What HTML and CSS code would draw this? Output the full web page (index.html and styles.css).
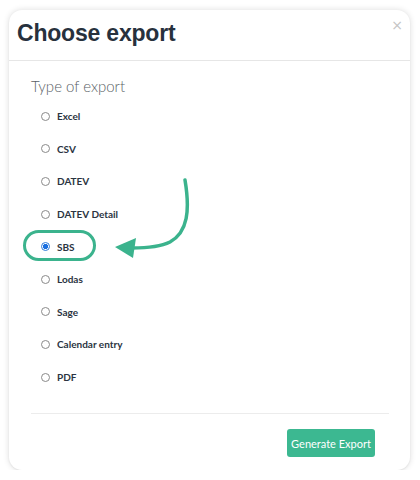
FILE: index.html
```html
<!DOCTYPE html>
<html lang="en">
<head>
  <meta charset="UTF-8">
  <meta name="viewport" content="width=device-width, initial-scale=1.0">
  <title>Choose export</title>
  <link rel="stylesheet" href="styles.css">
</head>
<body>
  <div class="modal">
    <div class="modal-header">
      <h1 class="title">Choose export</h1>
      <span class="close">&times;</span>
    </div>

    <div class="modal-body">
      <div class="section-label">Type of export</div>
      <div class="options">
        <label class="option"><input type="radio" name="type"><span>Excel</span></label>
        <label class="option"><input type="radio" name="type"><span>CSV</span></label>
        <label class="option"><input type="radio" name="type"><span>DATEV</span></label>
        <label class="option"><input type="radio" name="type"><span>DATEV Detail</span></label>
        <label class="option selected"><input type="radio" name="type" checked><span>SBS</span></label>
        <label class="option"><input type="radio" name="type"><span>Lodas</span></label>
        <label class="option"><input type="radio" name="type"><span>Sage</span></label>
        <label class="option"><input type="radio" name="type"><span>Calendar entry</span></label>
        <label class="option"><input type="radio" name="type"><span>PDF</span></label>
      </div>
    </div>

    <div class="modal-footer">
      <button class="btn-export">Generate Export</button>
    </div>

    <!-- annotation arrow pointing at SBS -->
    <svg class="arrow" width="90" height="90" viewBox="0 0 90 90">
      <path d="M85 10 C90 40 88 62 70 72 C60 77 48 78 32 78" fill="none" stroke="#3bb38d" stroke-width="3.5" stroke-linecap="round"/>
      <polygon points="15,77 36,68 33,88" fill="#3bb38d"/>
    </svg>
  </div>
</body>
</html>
```

FILE: styles.css
```css
body {
  margin: 0;
  background: #fff;
  font-family: "Lato", "Open Sans", sans-serif;
}

.modal {
  position: relative;
  margin: 10px 0 0 9px;
  width: 401px;
  height: 460px;
  box-sizing: border-box;
  background: #fff;
  border-radius: 13px;
  box-shadow: 0 0 6px rgba(0, 0, 0, 0.14), 0 1px 2px rgba(0, 0, 0, 0.06);
  display: flex;
  flex-direction: column;
}

.modal-header {
  height: 51px;
  box-sizing: border-box;
  padding: 9px 0 0 8px;
  border-bottom: 1px solid #e6e6e6;
}

.title {
  margin: 0;
  font-family: "Liberation Sans", Arial, sans-serif;
  font-size: 23px;
  font-weight: bold;
  line-height: 28px;
  color: #27313d;
  letter-spacing: -0.2px;
}

.close {
  position: absolute;
  top: 8px;
  right: 7px;
  font-family: "DejaVu Sans", sans-serif;
  font-size: 14px;
  line-height: 14px;
  color: #c4c4c4;
}

.modal-body {
  padding: 16px 21px 0 22px;
}

.section-label {
  font-size: 15px;
  font-weight: 300;
  color: #5a5f66;
  line-height: 18px;
}

.options {
  display: flex;
  flex-direction: column;
  margin-top: 5px;
  padding-bottom: 20px;
  border-bottom: 1px solid #ececec;
}

.option {
  position: relative;
  display: flex;
  align-items: center;
  height: 32.6px;
  padding-left: 10px;
  font-size: 10px;
  font-weight: bold;
  color: #2b3442;
}

.option input {
  appearance: none;
  margin: 0 7px 0 0;
  width: 9px;
  height: 9px;
  border: 1px solid #8a8a8a;
  border-radius: 50%;
  box-sizing: border-box;
  background: #fff;
}

.option input:checked {
  border: 1px solid #2e7bd9;
  background: radial-gradient(circle, #1a6fe0 0 2.4px, #fff 2.9px);
}

.option.selected::before {
  content: "";
  position: absolute;
  left: -8px;
  top: 0;
  width: 73px;
  height: 31px;
  box-sizing: border-box;
  border: 3px solid #3bb38d;
  border-radius: 16px;
}

.modal-footer {
  display: flex;
  justify-content: flex-end;
  padding: 15px 35px 0 0;
}

.btn-export {
  width: 88px;
  height: 28px;
  border: none;
  border-radius: 3px;
  background: #3cb891;
  color: #fff;
  font-family: "Lato", sans-serif;
  font-size: 11px;
  padding: 0;
}

.arrow {
  position: absolute;
  left: 91px;
  top: 160px;
}
```
